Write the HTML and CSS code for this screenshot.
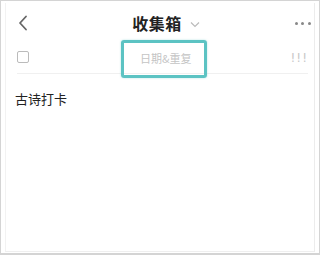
FILE: index.html
```html
<!DOCTYPE html>
<html>
<head>
<meta charset="utf-8">
<link rel="stylesheet" href="styles.css">
</head>
<body>
<div class="frame">
  <div class="inner">
    <div class="header">
      <svg class="back" width="12" height="16" viewBox="0 0 12 16"><path d="M9 1.5 L3 8 L9 14.5" fill="none" stroke="#666" stroke-width="1.8" stroke-linecap="round" stroke-linejoin="round"/></svg>
      <div class="title">收集箱<svg class="caret" width="10" height="7" viewBox="0 0 10 7"><path d="M1 1.5 L5 5.5 L9 1.5" fill="none" stroke="#bbb" stroke-width="1.2"/></svg></div>
      <div class="more"><span></span><span></span><span></span></div>
    </div>
    <div class="row">
      <div class="check"></div>
      <div class="date">日期&amp;重复</div>
      <div class="prio">!!!</div>
    </div>
    <div class="task">古诗打卡</div>
  </div>
  <div class="highlight"></div>
</div>
</body>
</html>
```
FILE: styles.css
```css
html, body { margin: 0; padding: 0; background: #fff; }
body { font-family: "Noto Sans CJK SC", "Noto Sans", sans-serif; }
.frame {
  position: relative;
  width: 320px; height: 255px;
  box-sizing: border-box;
  border: 1px solid #d4d4d4;
  border-bottom-width: 2px;
  padding: 2px 4px 1px 4px;
}
.inner {
  height: 100%;
  box-sizing: border-box;
  border-left: 1px solid #f2f2f2;
  border-right: 1px solid #ececec;
  border-bottom: 1px solid #efefef;
}
.header {
  display: flex; align-items: center; justify-content: space-between;
  height: 40px;
  padding: 0 3px 0 11px;
}
.back { display: block; }
.title {
  display: flex; align-items: center; gap: 8px;
  font-size: 16px; font-weight: 700; color: #222;
  margin-left: 8px;
  letter-spacing: 0.5px;
}
.caret { display: block; margin-top: 2px; }
.more { display: flex; gap: 3.5px; }
.more span { width: 3px; height: 3px; border-radius: 50%; background: #888; }
.row {
  display: flex; align-items: center; justify-content: space-between;
  height: 31px;
  margin: 0 6px 0 11px;
  border-bottom: 1px solid #f0f0f0;
  box-sizing: border-box;
}
.check {
  width: 10px; height: 10px;
  border: 1px solid #bbb; border-radius: 2px;
  margin-top: -2px;
}
.date { font-size: 11px; color: #c4c4c4; margin-left: 12px; }
.prio { font-size: 12px; color: #c8c8c8; letter-spacing: 1px; font-family: "DejaVu Sans", sans-serif; }
.task {
  padding: 15px 0 0 9px;
  font-size: 13px; color: #222;
}
.highlight {
  position: absolute;
  left: 120px; top: 39px;
  width: 80px; height: 32px;
  border: 3px solid #5cc3c3;
  border-radius: 3px;
  box-shadow: 0 0 2px rgba(92,195,195,0.5);
}
```
